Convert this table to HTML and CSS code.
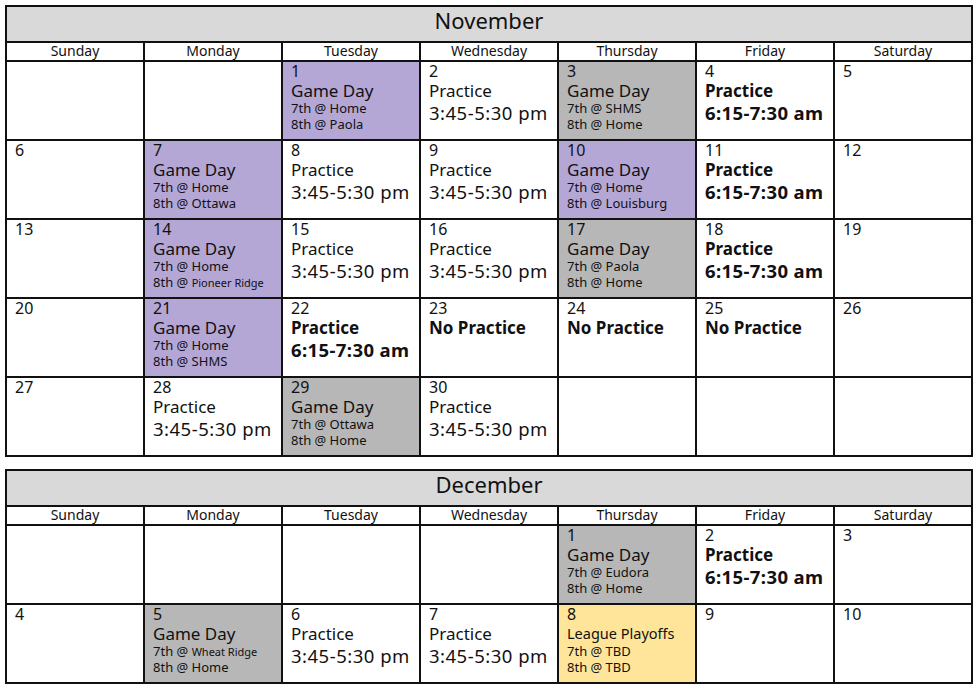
FILE: index.html
```html
<!DOCTYPE html>
<html>
<head>
<meta charset="utf-8">
<link rel="stylesheet" href="styles.css">
</head>
<body>
<div class="month">
  <div class="title">November</div>
  <div class="dow">Sunday</div><div class="dow">Monday</div><div class="dow">Tuesday</div><div class="dow">Wednesday</div><div class="dow">Thursday</div><div class="dow">Friday</div><div class="dow">Saturday</div>

  <div class="cell"></div>
  <div class="cell"></div>
  <div class="cell purple"><div class="num">1</div><div class="ev">Game Day</div><div class="sm">7th @ Home</div><div class="sm">8th @ Paola</div></div>
  <div class="cell"><div class="num">2</div><div class="ev">Practice</div><div class="time">3:45-5:30 pm</div></div>
  <div class="cell gray"><div class="num">3</div><div class="ev">Game Day</div><div class="sm">7th @ SHMS</div><div class="sm">8th @ Home</div></div>
  <div class="cell"><div class="num">4</div><div class="ev b">Practice</div><div class="time b">6:15-7:30 am</div></div>
  <div class="cell"><div class="num">5</div></div>

  <div class="cell"><div class="num">6</div></div>
  <div class="cell purple"><div class="num">7</div><div class="ev">Game Day</div><div class="sm">7th @ Home</div><div class="sm">8th @ Ottawa</div></div>
  <div class="cell"><div class="num">8</div><div class="ev">Practice</div><div class="time">3:45-5:30 pm</div></div>
  <div class="cell"><div class="num">9</div><div class="ev">Practice</div><div class="time">3:45-5:30 pm</div></div>
  <div class="cell purple"><div class="num">10</div><div class="ev">Game Day</div><div class="sm">7th @ Home</div><div class="sm">8th @ Louisburg</div></div>
  <div class="cell"><div class="num">11</div><div class="ev b">Practice</div><div class="time b">6:15-7:30 am</div></div>
  <div class="cell"><div class="num">12</div></div>

  <div class="cell"><div class="num">13</div></div>
  <div class="cell purple"><div class="num">14</div><div class="ev">Game Day</div><div class="sm">7th @ Home</div><div class="sm">8th @ <span class="xs">Pioneer Ridge</span></div></div>
  <div class="cell"><div class="num">15</div><div class="ev">Practice</div><div class="time">3:45-5:30 pm</div></div>
  <div class="cell"><div class="num">16</div><div class="ev">Practice</div><div class="time">3:45-5:30 pm</div></div>
  <div class="cell gray"><div class="num">17</div><div class="ev">Game Day</div><div class="sm">7th @ Paola</div><div class="sm">8th @ Home</div></div>
  <div class="cell"><div class="num">18</div><div class="ev b">Practice</div><div class="time b">6:15-7:30 am</div></div>
  <div class="cell"><div class="num">19</div></div>

  <div class="cell"><div class="num">20</div></div>
  <div class="cell purple"><div class="num">21</div><div class="ev">Game Day</div><div class="sm">7th @ Home</div><div class="sm">8th @ SHMS</div></div>
  <div class="cell"><div class="num">22</div><div class="ev b">Practice</div><div class="time b">6:15-7:30 am</div></div>
  <div class="cell"><div class="num">23</div><div class="ev b">No Practice</div></div>
  <div class="cell"><div class="num">24</div><div class="ev b">No Practice</div></div>
  <div class="cell"><div class="num">25</div><div class="ev b">No Practice</div></div>
  <div class="cell"><div class="num">26</div></div>

  <div class="cell"><div class="num">27</div></div>
  <div class="cell"><div class="num">28</div><div class="ev">Practice</div><div class="time">3:45-5:30 pm</div></div>
  <div class="cell gray"><div class="num">29</div><div class="ev">Game Day</div><div class="sm">7th @ Ottawa</div><div class="sm">8th @ Home</div></div>
  <div class="cell"><div class="num">30</div><div class="ev">Practice</div><div class="time">3:45-5:30 pm</div></div>
  <div class="cell"></div>
  <div class="cell"></div>
  <div class="cell"></div>
</div>

<div class="month">
  <div class="title">December</div>
  <div class="dow">Sunday</div><div class="dow">Monday</div><div class="dow">Tuesday</div><div class="dow">Wednesday</div><div class="dow">Thursday</div><div class="dow">Friday</div><div class="dow">Saturday</div>

  <div class="cell"></div>
  <div class="cell"></div>
  <div class="cell"></div>
  <div class="cell"></div>
  <div class="cell gray"><div class="num">1</div><div class="ev">Game Day</div><div class="sm">7th @ Eudora</div><div class="sm">8th @ Home</div></div>
  <div class="cell"><div class="num">2</div><div class="ev b">Practice</div><div class="time b">6:15-7:30 am</div></div>
  <div class="cell"><div class="num">3</div></div>

  <div class="cell"><div class="num">4</div></div>
  <div class="cell gray"><div class="num">5</div><div class="ev">Game Day</div><div class="sm">7th @ <span class="xs">Wheat Ridge</span></div><div class="sm">8th @ Home</div></div>
  <div class="cell"><div class="num">6</div><div class="ev">Practice</div><div class="time">3:45-5:30 pm</div></div>
  <div class="cell"><div class="num">7</div><div class="ev">Practice</div><div class="time">3:45-5:30 pm</div></div>
  <div class="cell yellow"><div class="num">8</div><div class="ev league">League Playoffs</div><div class="sm">7th @ TBD</div><div class="sm">8th @ TBD</div></div>
  <div class="cell"><div class="num">9</div></div>
  <div class="cell"><div class="num">10</div></div>
</div>
</body>
</html>
```
FILE: styles.css
```css
body {
  margin: 5px 0 0 5px;
  background: #fff;
  font-family: "Noto Sans", "DejaVu Sans", sans-serif;
  color: #111;
}
.month {
  width: 964px;
  display: grid;
  grid-template-columns: repeat(7, 1fr);
  grid-template-rows: 34px 17px;
  grid-auto-rows: 77px;
  gap: 2px;
  padding: 2px;
  background: #111;
  margin-bottom: 12px;
}
.title {
  grid-column: 1 / -1;
  background: #d9d9d9;
  text-align: center;
  font-size: 22px;
  line-height: 27px;
}
.dow {
  background: #fff;
  text-align: center;
  font-size: 14px;
  line-height: 16px;
}
.cell {
  background: #fff;
  padding: 0 8px;
}
.purple { background: #b4a7d6; }
.gray { background: #b7b7b7; }
.yellow { background: #ffe599; }
.num {
  font-size: 16px;
  line-height: 18px;
}
.ev {
  font-size: 17px;
  line-height: 21px;
}
.league {
  font-size: 14.5px;
}
.time {
  font-size: 18.5px;
  line-height: 23px;
  letter-spacing: 0.5px;
}
.b { font-weight: bold; }
.time.b { letter-spacing: 0.4px; }
.sm {
  font-size: 13px;
  line-height: 15.5px;
}
.xs { font-size: 11px; }
```
